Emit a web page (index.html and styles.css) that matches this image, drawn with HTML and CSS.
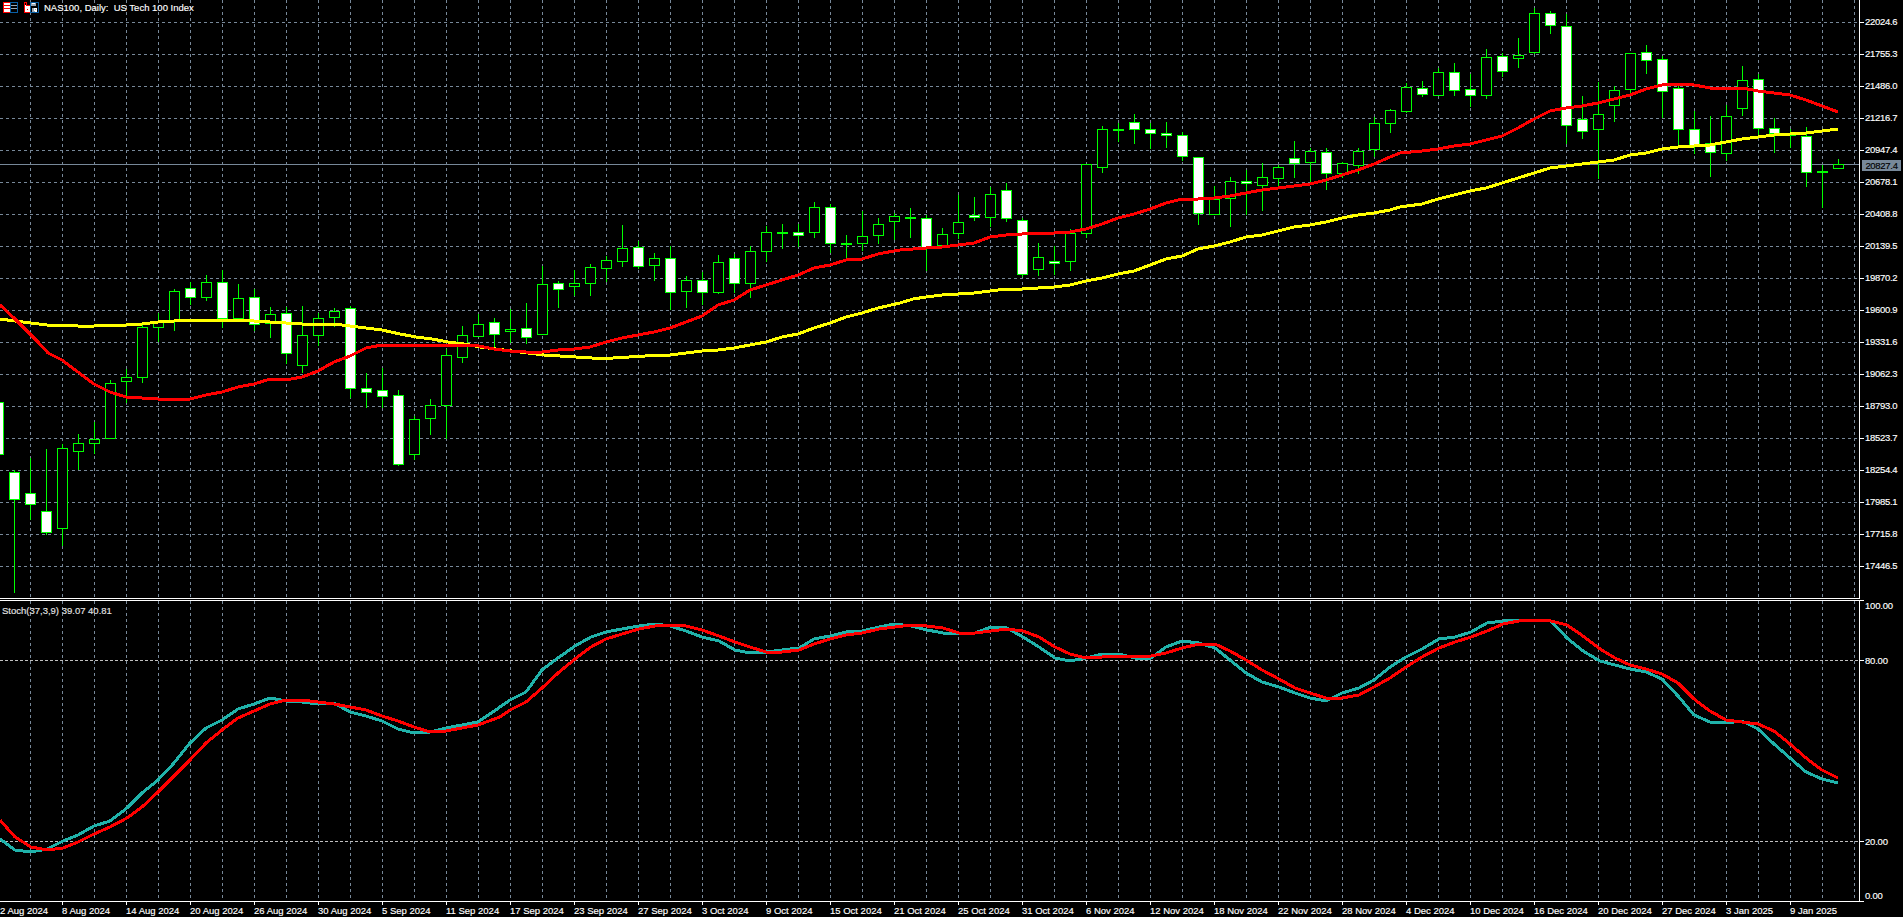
FILE: index.html
```html
<!DOCTYPE html>
<html lang="en">
<head>
<meta charset="utf-8">
<title>NAS100, Daily</title>
<link rel="stylesheet" href="styles.css">
</head>
<body>
<div class="terminal">
  <section class="pane pane-main">
    <div class="chart chart-main">
      <svg class="plot plot-main" viewBox="0 0 1859 598" aria-hidden="true">
        <path class="grid" d="M30.5 0V598M62.5 0V598M94.5 0V598M126.5 0V598M158.5 0V598M190.5 0V598M222.5 0V598M254.5 0V598M286.5 0V598M318.5 0V598M350.5 0V598M382.5 0V598M414.5 0V598M446.5 0V598M478.5 0V598M510.5 0V598M542.5 0V598M574.5 0V598M606.5 0V598M638.5 0V598M670.5 0V598M702.5 0V598M734.5 0V598M766.5 0V598M798.5 0V598M830.5 0V598M862.5 0V598M894.5 0V598M926.5 0V598M958.5 0V598M990.5 0V598M1022.5 0V598M1054.5 0V598M1086.5 0V598M1118.5 0V598M1150.5 0V598M1182.5 0V598M1214.5 0V598M1246.5 0V598M1278.5 0V598M1310.5 0V598M1342.5 0V598M1374.5 0V598M1406.5 0V598M1438.5 0V598M1470.5 0V598M1502.5 0V598M1534.5 0V598M1566.5 0V598M1598.5 0V598M1630.5 0V598M1662.5 0V598M1694.5 0V598M1726.5 0V598M1758.5 0V598M1790.5 0V598M1822.5 0V598M1854.5 0V598"/>
        <path class="grid" d="M0 22.5H1859M0 54.5H1859M0 86.5H1859M0 118.5H1859M0 150.5H1859M0 182.5H1859M0 214.5H1859M0 246.5H1859M0 278.5H1859M0 310.5H1859M0 342.5H1859M0 374.5H1859M0 406.5H1859M0 438.5H1859M0 470.5H1859M0 502.5H1859M0 534.5H1859M0 566.5H1859"/>
        <path class="price-line" d="M0 164.5H1859"/>
        <path class="wick" d="M14.5 470V593M30.5 458V520M46.5 449V535M62.5 444V546M78.5 434V470M94.5 422V454M110.5 380V439M126.5 369V403M142.5 322V383M158.5 313V342M174.5 289V331M190.5 282V305M206.5 275V301M222.5 270V328M238.5 284V319M254.5 289V331M270.5 307V338M286.5 307V364M302.5 306V373M318.5 313V346M334.5 308V327M350.5 306V398M366.5 373V408M382.5 368V408M398.5 390V466M414.5 416V460M430.5 399V435M446.5 349V439M462.5 326V363M478.5 314V337M494.5 318V347M510.5 309V343M526.5 303V344M542.5 266V334M558.5 281V308M574.5 270V296M590.5 264V296M606.5 256V282M622.5 225V267M638.5 241V269M654.5 253V281M670.5 246V310M686.5 276V308M702.5 272V305M718.5 255V294M734.5 254V293M750.5 246V298M766.5 226V262M782.5 224V249M798.5 224V247M814.5 202V238M830.5 204V253M846.5 235V259M862.5 211V251M878.5 218V244M894.5 213V240M910.5 208V238M926.5 215V271M942.5 228V247M958.5 195V239M974.5 197V221M990.5 187V227M1006.5 183V222M1022.5 218V277M1038.5 243V276M1054.5 246V275M1070.5 229V271M1086.5 164V238M1102.5 126V173M1118.5 123V142M1134.5 114V144M1150.5 123V149M1166.5 122V148M1182.5 132V161M1198.5 157V225M1214.5 186V215M1230.5 177V227M1246.5 170V215M1262.5 163V211M1278.5 165V187M1294.5 141V178M1310.5 148V182M1326.5 148V190M1342.5 162V178M1358.5 148V174M1374.5 117V157M1390.5 109V133M1406.5 83V113M1422.5 81V97M1438.5 68V95M1454.5 63V96M1470.5 74V107M1486.5 49V99M1502.5 53V77M1518.5 38V68M1534.5 8V54M1550.5 11V34M1566.5 14V144M1582.5 96V139M1598.5 82V179M1614.5 86V122M1630.5 53V94M1646.5 45V74M1662.5 56V118M1678.5 85V147M1694.5 111V154M1710.5 116V177M1726.5 105V161M1742.5 66V116M1758.5 74V137M1774.5 118V153M1790.5 129V148M1806.5 127V187M1822.5 165V208M1838.5 159V169"/>
        <path class="body-up" d="M57.5 448.5h10v80h-10zM73.5 443.5h10v8h-10zM89.5 439.5h10v4h-10zM105.5 383.5h10v55h-10zM121.5 377.5h10v4h-10zM137.5 327.5h10v50h-10zM153.5 322.5h10v5h-10zM169.5 291.5h10v29h-10zM201.5 282.5h10v15h-10zM233.5 298.5h10v20h-10zM265.5 314.5h10v9h-10zM297.5 335.5h10v30h-10zM313.5 318.5h10v17h-10zM329.5 311.5h10v6h-10zM409.5 419.5h10v35h-10zM425.5 405.5h10v13h-10zM441.5 355.5h10v50h-10zM457.5 335.5h10v22h-10zM473.5 324.5h10v12h-10zM505.5 329.5h10v2h-10zM537.5 284.5h10v50h-10zM569.5 283.5h10v3h-10zM585.5 267.5h10v16h-10zM601.5 260.5h10v8h-10zM617.5 248.5h10v13h-10zM649.5 258.5h10v7h-10zM681.5 280.5h10v11h-10zM713.5 262.5h10v30h-10zM745.5 251.5h10v32h-10zM761.5 232.5h10v19h-10zM809.5 207.5h10v25h-10zM857.5 236.5h10v7h-10zM873.5 224.5h10v11h-10zM889.5 216.5h10v5h-10zM937.5 234.5h10v11h-10zM953.5 222.5h10v11h-10zM985.5 194.5h10v23h-10zM1033.5 257.5h10v12h-10zM1065.5 233.5h10v28h-10zM1081.5 164.5h10v69h-10zM1097.5 129.5h10v38h-10zM1209.5 199.5h10v15h-10zM1225.5 181.5h10v17h-10zM1257.5 177.5h10v8h-10zM1273.5 167.5h10v11h-10zM1305.5 151.5h10v11h-10zM1337.5 163.5h10v10h-10zM1353.5 151.5h10v14h-10zM1369.5 123.5h10v26h-10zM1385.5 110.5h10v13h-10zM1401.5 87.5h10v24h-10zM1433.5 72.5h10v23h-10zM1481.5 57.5h10v38h-10zM1513.5 55.5h10v3h-10zM1529.5 13.5h10v39h-10zM1593.5 114.5h10v15h-10zM1609.5 90.5h10v15h-10zM1625.5 53.5h10v36h-10zM1721.5 116.5h10v37h-10zM1737.5 80.5h10v28h-10zM1833.5 164.5h10v4h-10z"/>
        <path class="body-down" d="M-6.5 402.5h10v52h-10zM9.5 472.5h10v27h-10zM25.5 493.5h10v11h-10zM41.5 511.5h10v21h-10zM185.5 288.5h10v9h-10zM217.5 282.5h10v36h-10zM249.5 297.5h10v27h-10zM281.5 313.5h10v40h-10zM345.5 308.5h10v80h-10zM361.5 388.5h10v4h-10zM377.5 390.5h10v6h-10zM393.5 395.5h10v69h-10zM489.5 322.5h10v12h-10zM521.5 328.5h10v9h-10zM553.5 283.5h10v6h-10zM633.5 247.5h10v19h-10zM665.5 258.5h10v34h-10zM697.5 280.5h10v12h-10zM729.5 258.5h10v25h-10zM793.5 232.5h10v3h-10zM825.5 207.5h10v36h-10zM921.5 218.5h10v30h-10zM969.5 215.5h10v2h-10zM1001.5 190.5h10v28h-10zM1017.5 220.5h10v54h-10zM1049.5 261.5h10v2h-10zM1129.5 122.5h10v7h-10zM1145.5 129.5h10v4h-10zM1161.5 133.5h10v2h-10zM1177.5 135.5h10v21h-10zM1193.5 157.5h10v56h-10zM1241.5 181.5h10v2h-10zM1289.5 158.5h10v5h-10zM1321.5 152.5h10v21h-10zM1417.5 88.5h10v6h-10zM1449.5 72.5h10v18h-10zM1465.5 89.5h10v6h-10zM1497.5 56.5h10v15h-10zM1545.5 13.5h10v12h-10zM1561.5 26.5h10v99h-10zM1577.5 119.5h10v12h-10zM1641.5 52.5h10v8h-10zM1657.5 59.5h10v32h-10zM1673.5 88.5h10v41h-10zM1689.5 129.5h10v17h-10zM1705.5 143.5h10v9h-10zM1753.5 79.5h10v49h-10zM1769.5 128.5h10v5h-10zM1801.5 136.5h10v36h-10z"/>
        <path class="doji" d="M777 233h11M841 244h11M905 218h11M1113 130h11M1785 135h11M1817 172h11"/>
        <polyline class="ma ma-slow" points="0,319 15,321 31,323 47,325 63,325 78,326 94,326 110,325 126,325 142,324 158,322 174,321 190,320 238,320 254,321 270,322 286,323 302,324 318,325 334,324 350,326 366,328 382,330 400,334 416,337 432,339 448,342 464,344 480,347 496,349 512,351 528,353 544,355 560,356 576,357 592,358 613,358 629,357 645,356 670,355 686,353 702,351 718,350 734,348 750,345 766,342 782,337 798,334 814,328 830,323 846,317 862,313 878,308 900,303 913,299 926,297 942,295 958,294 974,293 990,291 1006,289 1022,289 1038,288 1054,287 1070,285 1086,281 1102,278 1118,274 1134,271 1150,265 1166,259 1182,256 1198,249 1214,246 1230,242 1246,237 1262,235 1278,231 1294,227 1310,225 1326,222 1342,218 1358,215 1374,213 1390,210 1400,207 1422,204 1438,199 1454,195 1470,191 1486,188 1502,183 1518,178 1534,173 1550,168 1566,166 1582,164 1598,162 1614,160 1630,155 1646,153 1662,149 1678,147 1694,146 1710,145 1726,142 1742,139 1758,137 1774,135 1790,134 1806,133 1822,131 1838,129"/>
        <polyline class="ma ma-fast" points="0,305 15,319 38,342 48,353 62,360 78,372 94,384 110,392 126,397 142,398 158,399 190,399 206,395 222,392 238,387 254,384 270,379 286,380 302,377 318,371 334,362 350,356 366,348 382,345 398,346 414,345 430,346 447,345 479,346 494,349 510,351 526,352 542,352 558,350 574,349 590,347 606,342 622,338 638,335 654,332 670,328 686,322 702,316 718,305 734,300 750,290 766,285 782,280 798,275 814,268 830,265 846,260 862,259 878,254 894,251 900,250 926,248 942,247 958,245 974,243 990,237 1006,235 1022,234 1054,233 1070,232 1086,229 1102,224 1118,218 1134,214 1150,209 1166,203 1182,199 1198,199 1214,198 1230,196 1246,193 1262,190 1278,188 1294,186 1310,184 1326,180 1342,175 1358,170 1374,164 1390,157 1400,153 1422,151 1438,149 1454,146 1470,144 1486,140 1502,136 1518,128 1534,119 1550,111 1566,108 1582,106 1598,103 1614,99 1630,95 1646,89 1662,85 1678,84 1694,85 1710,88 1726,89 1742,88 1758,91 1774,93 1790,95 1806,100 1822,106 1838,112"/>
      </svg>
      <div class="legend legend-main">
        <svg class="flag" viewBox="0 0 15 11" aria-hidden="true">
          <path class="ico-white" d="M0 0h8v11H0z"/>
          <path class="ico-red-line" d="M.5.5h7v10h-7zM1 3.5h6M1 6.5h6"/>
          <path class="ico-gray" d="M8 3h6v1H8zM8 6h6v1H8z"/>
          <path class="ico-blue-line" d="M7.5.5h7v10h-7z"/>
        </svg>
        <svg class="flag" viewBox="0 0 15 11" aria-hidden="true">
          <path class="ico-white" d="M0 3h7v8H0z"/>
          <path class="ico-red-line" d="M.5.5h2v3h4v7h-6z"/>
          <path class="ico-red-dot" d="M3 7h1v1H3z"/>
          <path class="ico-gray" d="M7 0h5v4H7z"/>
          <path class="ico-white" d="M8 1h3v1H8z"/>
          <path class="ico-blue-line" d="M6.5 4.500V.5h8v10h-8z"/>
          <path class="ico-gray" d="M8 6h2v4H8z"/>
          <path class="ico-white" d="M10 6h3v4h-3z"/>
          <path class="ico-gray" d="M11 7h1v1h-1zM10 9h1v1h-1z"/>
        </svg>
        <span class="legend-text">NAS100, Daily:&nbsp; US Tech 100 Index</span>
      </div>
    </div>
    <div class="axis price-axis">
      <div class="tick">22024.6</div>
      <div class="tick">21755.3</div>
      <div class="tick">21486.0</div>
      <div class="tick">21216.7</div>
      <div class="tick">20947.4</div>
      <div class="tick">20678.1</div>
      <div class="tick">20408.8</div>
      <div class="tick">20139.5</div>
      <div class="tick">19870.2</div>
      <div class="tick">19600.9</div>
      <div class="tick">19331.6</div>
      <div class="tick">19062.3</div>
      <div class="tick">18793.0</div>
      <div class="tick">18523.7</div>
      <div class="tick">18254.4</div>
      <div class="tick">17985.1</div>
      <div class="tick">17715.8</div>
      <div class="tick">17446.5</div>
      <div class="bid-tag">20827.4</div>
    </div>
  </section>

  <section class="pane pane-sub">
    <div class="chart chart-sub">
      <svg class="plot plot-sub" viewBox="0 601 1859 300" aria-hidden="true">
        <path class="grid" d="M30.5 601V901M62.5 601V901M94.5 601V901M126.5 601V901M158.5 601V901M190.5 601V901M222.5 601V901M254.5 601V901M286.5 601V901M318.5 601V901M350.5 601V901M382.5 601V901M414.5 601V901M446.5 601V901M478.5 601V901M510.5 601V901M542.5 601V901M574.5 601V901M606.5 601V901M638.5 601V901M670.5 601V901M702.5 601V901M734.5 601V901M766.5 601V901M798.5 601V901M830.5 601V901M862.5 601V901M894.5 601V901M926.5 601V901M958.5 601V901M990.5 601V901M1022.5 601V901M1054.5 601V901M1086.5 601V901M1118.5 601V901M1150.5 601V901M1182.5 601V901M1214.5 601V901M1246.5 601V901M1278.5 601V901M1310.5 601V901M1342.5 601V901M1374.5 601V901M1406.5 601V901M1438.5 601V901M1470.5 601V901M1502.5 601V901M1534.5 601V901M1566.5 601V901M1598.5 601V901M1630.5 601V901M1662.5 601V901M1694.5 601V901M1726.5 601V901M1758.5 601V901M1790.5 601V901M1822.5 601V901M1854.5 601V901"/>
        <path class="level" d="M0 660.5H1859M0 841.5H1859"/>
        <polyline class="stoch stoch-main" points="0,839 15,850 31,852 47,849 63,841 78,835 94,826 110,821 127,808 142,793 158,780 174,763 190,743 206,728 222,720 238,709 254,704 270,698 286,701 302,702 318,704 334,703 350,712 366,716 382,721 398,729 414,733 430,732 446,728 462,725 478,722 500,707 510,700 526,692 542,670 558,658 575,646 591,637 606,632 622,629 639,626 655,624 670,626 686,631 702,637 719,641 735,650 750,653 766,652 782,650 799,648 814,639 830,636 846,632 862,631 879,627 895,624 911,626 927,630 943,633 959,634 975,633 991,627 1007,628 1023,637 1039,647 1055,658 1070,661 1086,658 1102,654 1119,654 1135,658 1151,658 1166,647 1182,641 1199,643 1215,648 1230,660 1246,673 1262,682 1279,687 1295,693 1310,698 1326,701 1342,693 1359,688 1374,680 1390,667 1406,657 1422,649 1439,639 1455,637 1471,632 1487,623 1503,621 1519,620 1535,620 1551,621 1567,638 1583,651 1600,661 1615,665 1630,669 1646,672 1662,679 1678,696 1694,715 1710,722 1726,723 1742,721 1758,729 1774,744 1790,758 1806,772 1822,779 1838,783"/>
        <polyline class="stoch stoch-signal" points="0,820 15,837 31,847 47,850 63,848 78,842 94,834 110,827 127,818 142,807 158,792 174,776 190,760 206,743 222,730 238,718 254,711 270,704 286,700 302,700 318,702 334,704 350,707 366,710 382,716 398,721 414,727 430,732 446,731 462,728 478,725 500,717 510,710 526,702 542,688 558,673 575,659 591,647 606,639 622,634 639,629 655,626 670,625 686,626 702,630 719,636 735,642 750,647 766,652 782,652 799,650 814,644 830,639 846,635 862,633 879,629 895,627 911,625 927,626 943,628 959,633 975,633 991,631 1007,629 1023,631 1039,637 1055,647 1070,654 1086,658 1102,657 1119,656 1135,656 1151,656 1166,653 1182,648 1199,644 1215,644 1230,651 1246,660 1262,670 1279,679 1295,688 1310,693 1326,698 1342,698 1359,695 1374,687 1390,678 1406,667 1422,657 1439,648 1455,642 1471,637 1487,631 1503,624 1519,621 1535,620 1551,621 1567,625 1583,636 1600,649 1615,658 1630,665 1646,669 1662,674 1678,683 1694,699 1710,711 1726,720 1742,722 1758,724 1774,731 1790,744 1806,758 1822,770 1838,778"/>
      </svg>
      <div class="legend legend-sub">Stoch(37,3,9) 39.07 40.81</div>
    </div>
    <div class="axis level-axis">
      <div class="lvl lvl-top">100.00</div>
      <div class="lvl lvl-80">80.00</div>
      <div class="lvl lvl-20">20.00</div>
      <div class="lvl lvl-bottom">0.00</div>
    </div>
  </section>

  <footer class="time-axis">
    <div class="date date-first">2 Aug 2024</div>
    <div class="date">8 Aug 2024</div>
    <div class="date">14 Aug 2024</div>
    <div class="date">20 Aug 2024</div>
    <div class="date">26 Aug 2024</div>
    <div class="date">30 Aug 2024</div>
    <div class="date">5 Sep 2024</div>
    <div class="date">11 Sep 2024</div>
    <div class="date">17 Sep 2024</div>
    <div class="date">23 Sep 2024</div>
    <div class="date">27 Sep 2024</div>
    <div class="date">3 Oct 2024</div>
    <div class="date">9 Oct 2024</div>
    <div class="date">15 Oct 2024</div>
    <div class="date">21 Oct 2024</div>
    <div class="date">25 Oct 2024</div>
    <div class="date">31 Oct 2024</div>
    <div class="date">6 Nov 2024</div>
    <div class="date">12 Nov 2024</div>
    <div class="date">18 Nov 2024</div>
    <div class="date">22 Nov 2024</div>
    <div class="date">28 Nov 2024</div>
    <div class="date">4 Dec 2024</div>
    <div class="date">10 Dec 2024</div>
    <div class="date">16 Dec 2024</div>
    <div class="date">20 Dec 2024</div>
    <div class="date">27 Dec 2024</div>
    <div class="date">3 Jan 2025</div>
    <div class="date">9 Jan 2025</div>
  </footer>
</div>
</body>
</html>
```

FILE: styles.css
```css
* { box-sizing: border-box; }
html, body { margin: 0; height: 100%; background: #000; }
.terminal {
  display: flex; flex-direction: column;
  width: 1903px; height: 917px; overflow: hidden;
  background: #000; color: #fff;
  font: 9.5px/11px "Liberation Sans", Arial, sans-serif;
  -webkit-text-stroke: 0.15px currentColor;
}
.pane { display: flex; flex: none; }
.pane-main { height: 600px; }
.pane-sub { height: 302px; }
.chart { position: relative; width: 1860px; flex: none; border-right: 1px solid #fff; overflow: hidden; }
.chart-main { height: 599px; border-bottom: 1px solid #fff; }
.chart-sub { height: 302px; border-top: 1px solid #fff; border-bottom: 1px solid #fff; }
.plot { display: block; width: 1859px; shape-rendering: crispEdges; }
.plot-main { height: 598px; }
.plot-sub { height: 300px; }
.grid { fill: none; stroke: #778899; stroke-width: 1; stroke-dasharray: 3 3; }
.level { fill: none; stroke: #c0c0c0; stroke-width: 1; stroke-dasharray: 3 2; }
.price-line { fill: none; stroke: #778899; stroke-width: 1; }
.wick { fill: none; stroke: #00ff00; stroke-width: 1; }
.body-up { fill: #000; stroke: #00ff00; stroke-width: 1; }
.body-down { fill: #fff; stroke: #00ff00; stroke-width: 1; }
.doji { fill: none; stroke: #00ff00; stroke-width: 2; }
.ma, .stoch { fill: none; stroke-linejoin: round; }
.ma { stroke-width: 3; }
.ma-slow { stroke: #ffff00; }
.ma-fast { stroke: #ff0000; }
.stoch { stroke-width: 3; }
.stoch-main { stroke: #20b2aa; }
.stoch-signal { stroke: #ff0000; }

.legend { position: absolute; display: flex; align-items: center; white-space: nowrap; }
.legend-main { left: 3px; top: 2px; height: 11px; }
.legend-sub { left: 2px; top: 4px; color: #e4e4e4; }
.legend-text { margin-left: 5px; }
.flag { display: block; width: 15px; height: 11px; margin-right: 6px; flex: none; shape-rendering: crispEdges; }
.flag + .flag { margin-right: 0; }
.ico-white { fill: #fff; }
.ico-gray { fill: #9aa7b4; }
.ico-red-line { fill: none; stroke: #ff0000; }
.ico-blue-line { fill: none; stroke: #0a5fa5; }
.ico-red-dot { fill: #ff0000; }

.axis { position: relative; flex: 1; }
.price-axis { padding-top: 5px; letter-spacing: -0.3px; }
.tick { display: flex; align-items: center; height: 32px; }
.tick::before, .lvl::before { content: ""; flex: none; width: 4px; height: 1px; margin-right: 1px; background: #fff; }
.tick::before { margin-top: 2px; }
.bid-tag {
  position: absolute; left: 2px; top: 160px; width: 39px; height: 11px;
  background: #778899; color: #000; text-align: center;
}
.level-axis { display: flex; flex-direction: column; letter-spacing: -0.2px; }
.lvl { display: flex; align-items: center; height: 11px; flex: none; }
.lvl-top::before { align-self: flex-start; }
.lvl-bottom::before { align-self: flex-end; }
.lvl-80 { margin-top: 44px; }
.lvl-20 { margin-top: 170px; }
.lvl-bottom { margin-top: 42px; height: 13px; }

.time-axis { display: flex; flex: none; height: 15px; }
.date { flex: none; width: 64px; white-space: nowrap; }
.date-first { width: 62px; }
.date::before { content: ""; display: block; width: 1px; height: 3px; background: #fff; }
.date-first::before { background: none; }
```
